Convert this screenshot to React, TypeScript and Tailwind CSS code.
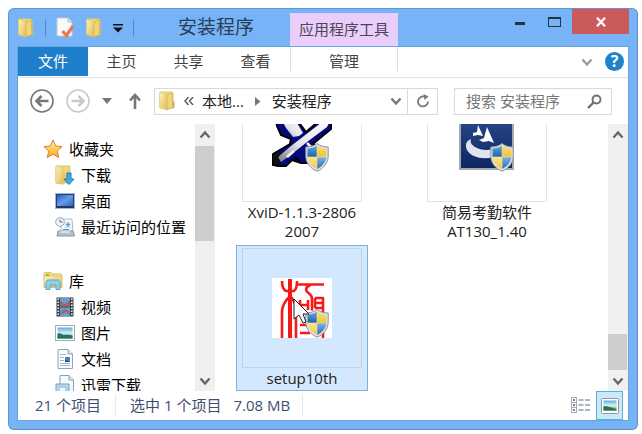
import type { ReactNode } from "react";
import clsx from "clsx";

/* ---------- icons ---------- */

function Defs() {
  return (
    <svg className="absolute h-0 w-0" aria-hidden="true">
      <defs>
        <linearGradient id="folder" x1="0" x2="1" y1="0" y2="1">
          <stop offset="0" stopColor="#fdf3bd" />
          <stop offset="1" stopColor="#dfbb4c" />
        </linearGradient>
        <linearGradient id="folderBack" x1="0" x2="0" y1="0" y2="1">
          <stop offset="0" stopColor="#f3dc83" />
          <stop offset="1" stopColor="#e0bf55" />
        </linearGradient>
        <linearGradient id="star" x1="0" x2="0" y1="0" y2="1">
          <stop offset="0" stopColor="#fff2a0" />
          <stop offset="1" stopColor="#f9a81c" />
        </linearGradient>
        <linearGradient id="screen" x1="0" x2="1" y1="0" y2="1">
          <stop offset="0" stopColor="#2457b8" />
          <stop offset="0.5" stopColor="#6a9be6" />
          <stop offset="1" stopColor="#2a5cc0" />
        </linearGradient>
        <linearGradient id="sky" x1="0" x2="0" y1="0" y2="1">
          <stop offset="0" stopColor="#5aaede" />
          <stop offset="0.5" stopColor="#d8f0f4" />
          <stop offset="1" stopColor="#3d8d62" />
        </linearGradient>
        <linearGradient id="navy" x1="0" x2="0" y1="0" y2="1">
          <stop offset="0" stopColor="#2a4a8c" />
          <stop offset="1" stopColor="#0d2660" />
        </linearGradient>
        <linearGradient id="silver" x1="0" x2="1" y1="1" y2="0">
          <stop offset="0" stopColor="#777" />
          <stop offset="0.4" stopColor="#e4e4e8" />
          <stop offset="1" stopColor="#fff" />
        </linearGradient>
        <linearGradient id="shieldBlue" x1="0" x2="0" y1="0" y2="1">
          <stop offset="0" stopColor="#7db4e2" />
          <stop offset="1" stopColor="#1c62b0" />
        </linearGradient>
        <linearGradient id="shieldGold" x1="0" x2="0" y1="0" y2="1">
          <stop offset="0" stopColor="#fbe48a" />
          <stop offset="1" stopColor="#efc33a" />
        </linearGradient>
        <clipPath id="shieldClip">
          <path d="M12 2.500C9.500 4.500 6 5.500 2.500 5.500v7C2.500 19 6.500 23.500 12 26c5.500-2.500 9.500-7 9.500-13.500v-7C18 5.500 14.500 4.500 12 2.500z" />
        </clipPath>
      </defs>
    </svg>
  );
}

function FolderIcon() {
  return (
    <svg width="18" height="20" viewBox="0 0 18 20">
      <path d="M2 1h12l1 1v15H2z" fill="url(#folderBack)" stroke="#dfc56f" />
      <path d="M1.500 1.500L9 3.500v15.500l-7.500-2.500z" fill="url(#folder)" stroke="#e3ca74" strokeWidth=".6" />
      <path d="M9 4l5.500-2v14.500L9 19z" fill="#efd577" stroke="#cba843" strokeWidth=".6" />
      <path d="M14.500 10h2v7l-2 .5z" fill="#d9bb58" />
      <path d="M15 12.500h1v3h-1z" fill="#7fb8d8" />
    </svg>
  );
}

function PropertiesIcon() {
  return (
    <svg width="19" height="21" viewBox="0 0 19 21">
      <path d="M1 1h11l4 4v14H1z" fill="#fafafa" stroke="#c4c8cc" />
      <path d="M12 1v4h4" fill="#e3e6e9" stroke="#b4b8bc" />
      <path d="M6.500 14l4 4.500L17 9" fill="none" stroke="#e4794f" strokeWidth="3.200" />
    </svg>
  );
}

function StarIcon() {
  return (
    <svg width="20" height="20" viewBox="0 0 20 20">
      <path
        d="M10 1l2.700 6 6.300.7-4.700 4.300 1.400 6.500L10 15.200l-5.700 3.300 1.400-6.500L1 7.700 7.300 7z"
        fill="url(#star)"
        stroke="#e2802b"
        strokeLinejoin="round"
      />
    </svg>
  );
}

function DownloadsIcon() {
  return (
    <svg width="20" height="20" viewBox="0 0 20 20">
      <path d="M1 1h14v17H1z" fill="url(#folderBack)" stroke="#dcc36e" />
      <path d="M1 1l7 1.500v17L1 18z" fill="url(#folder)" stroke="#dcc36e" strokeWidth=".6" />
      <path d="M12 8h4v6h3l-5 5.500L9 14h3z" fill="#41abea" stroke="#1d78b8" />
    </svg>
  );
}

function DesktopIcon() {
  return (
    <svg width="20" height="20" viewBox="0 0 20 20">
      <rect x=".5" y="2.500" width="19" height="15" fill="#d5dde6" stroke="#aab6c4" />
      <rect x="1.500" y="3.500" width="17" height="12" fill="url(#screen)" stroke="#173e8c" />
      <path d="M1 15.500h18v1.500H1z" fill="#26364e" />
    </svg>
  );
}

function RecentIcon() {
  return (
    <svg width="20" height="20" viewBox="0 0 20 20">
      <path d="M6 2h11l1 13H6z" fill="#f5f8fb" stroke="#b0b8c0" />
      <path d="M10 6h6v5h-6z" fill="#d1e7f8" />
      <path d="M13 5v5M11 7.500h4M8 12.500h6" stroke="#499bd8" strokeWidth="1.200" />
      <path d="M3 14h15l1.500 5H2z" fill="#b9bdc2" stroke="#8f959b" />
      <path d="M5 15h10" stroke="#e9ecee" strokeWidth="1.500" />
      <circle cx="5" cy="5" r="4.300" fill="#eef3f7" stroke="#9aa7b4" />
      <path d="M5 2.500V5h2.500" fill="none" stroke="#55697c" />
    </svg>
  );
}

function LibraryIcon() {
  return (
    <svg width="20" height="20" viewBox="0 0 20 20">
      <path d="M1 16.500V2.500l1-1h6l1.500 1.500H18l1 1v12.500z" fill="url(#folderBack)" stroke="#d9bf66" />
      <path d="M1.500 6h17v9h-17z" fill="url(#folder)" />
      <path d="M3 4h3" stroke="#6cae4c" strokeWidth="1.500" />
      <path d="M3 18.500V11l1.500-2h11l1.500 2v7.500h-4V14H7v4.500z" fill="#8fd0ee" stroke="#55a9d3" />
    </svg>
  );
}

function VideoIcon() {
  return (
    <svg width="20" height="20" viewBox="0 0 20 20">
      <path d="M1.500.5h17v19h-17z" fill="#34454f" />
      <path d="M5 1h10v8.500H5zM5 10.500h10V19H5z" fill="#5d9fd6" />
      <path d="M5 4l5 3 5-4v6H5zM7 14l3-2 5 3v3l-4-3-6 3z" fill="#b0604c" />
      <path d="M3.200 1.500v17M16.800 1.500v17" stroke="#e4ecef" strokeWidth="1.600" strokeDasharray="1.500 1.500" />
    </svg>
  );
}

function PictureIcon() {
  return (
    <svg width="20" height="20" viewBox="0 0 20 20">
      <rect x=".5" y="2.500" width="19" height="15" fill="#fff" stroke="#9fadb9" />
      <rect x="2.500" y="4.500" width="15" height="11" fill="url(#sky)" />
      <path d="M2.500 15.500v-5q3-1 6 1.500 4-.5 9 .5v3z" fill="#1f7565" />
    </svg>
  );
}

function DocumentIcon() {
  return (
    <svg width="20" height="20" viewBox="0 0 20 20">
      <path d="M3 .5h10L17.500 5v14.500H3z" fill="#fafcfd" stroke="#98a3ad" />
      <path d="M13 .5V5h4.500" fill="#dfe6ec" stroke="#98a3ad" />
      <path d="M5 5.500h6M5 8.500h4M5 11.500h4M5 14.500h10M5 16.500h10" stroke="#a6b6c4" />
      <rect x="10" y="8" width="5" height="5" fill="#3e83c5" />
      <path d="M10 11l5 2h-5z" fill="#203f6c" />
    </svg>
  );
}

function ThunderIcon() {
  return (
    <svg width="20" height="20" viewBox="0 0 20 20">
      <path d="M5 .5h9L18.500 5v14.500H5z" fill="#f4f9fc" stroke="#8ea0b0" />
      <path d="M14 .5V5h4.500" fill="#d9e4ed" stroke="#8ea0b0" />
      <path d="M1 9h13v10.500H1z" fill="#b9dbef" stroke="#6f9fc2" />
      <path d="M4 12h7v7H4z" fill="#eef8fd" stroke="#86b7d6" />
    </svg>
  );
}

function Shield() {
  return (
    <g transform="translate(33 31)">
      <path
        d="M12 .5C9 3 5 4 .8 4v9C.8 20 5.500 25.500 12 28.200 18.500 25.500 23.200 20 23.200 13V4C19 4 15 3 12 .5z"
        fill="#dde2e6"
        stroke="#8d9499"
      />
      <g clipPath="url(#shieldClip)">
        <path d="M0 0h12v14H0z" fill="url(#shieldBlue)" />
        <path d="M12 0h12v14H12z" fill="url(#shieldGold)" />
        <path d="M0 14h12v14H0z" fill="url(#shieldGold)" />
        <path d="M12 14h12v14H12z" fill="url(#shieldBlue)" />
        <path d="M12 0v28M0 14h24" stroke="#f3e7a6" strokeWidth=".6" />
      </g>
    </g>
  );
}

function XvidIcon() {
  return (
    <svg width="60" height="60" viewBox="0 0 60 60">
      <path
        d="M3 4l2 10 4 9 10 4-1 5L1 42v11l5 1h8l6-6 9 3h14l-1-20 17-14 1-9H48L34 20 22 4z"
        fill="#07077e"
        stroke="#000"
        strokeWidth="2"
      />
      <path d="M8 5l6 11 7 9 6-1 4-3L21 4z" fill="url(#silver)" />
      <path d="M6 45l13-11L50 10l8-1-3 6-20 15-15 12-11 8z" fill="url(#silver)" />
      <path d="M1 43l6-4 2 2-3 5 3 6-7 1z" fill="#111" />
      <path d="M15 45l7-6M35 31l4 4" stroke="#f4f4f4" strokeWidth="2.500" />
      <path d="M22 45l6 4" stroke="#000" strokeWidth="2" />
      <Shield />
    </svg>
  );
}

function InstallIcon() {
  return (
    <svg width="60" height="60" viewBox="0 0 60 60">
      <rect x="3" y="3" width="53" height="54" fill="url(#navy)" stroke="#a3a9b3" strokeWidth="2" />
      <path d="M16 21l4-1 1-7 5 11-5-1-5 1z" fill="#fff" />
      <path d="M22 28l5-2 3-11 7 16-5-2-6 1z" fill="#fff" />
      <path d="M14 27C6 30 8 40 17 44c6 2.500 12 3 19 1v-8c-6 2-13 1-18-2-4-2.500-5-5-4-8z" fill="#dfe5ef" />
      <Shield />
    </svg>
  );
}

function SealIcon() {
  return (
    <svg width="60" height="60" viewBox="0 0 60 60">
      <path d="M0 0h60v60H0z" fill="#fff" />
      <g fill="none" stroke="#f8191b" strokeWidth="2.600" strokeLinejoin="round">
        <path d="M10 3q0 8 4 10h8q3-2 3-10" />
        <path d="M18 1v59" strokeWidth="4" />
        <path d="M10 60V34q0-8 8-16 6 6 6 14v28" />
        <path d="M26 6.500h26M39 6.500q-8 4-3 8 4 3 4 6v12" />
        <path d="M28 22v10M36 22v10M28 27h8M43 20h8v40M43 20v10M43 25h7M43 30h7" />
        <path d="M28 47h12M28 55h10" />
      </g>
      <Shield />
      <path d="M22 21v20l5-4 4 8 3-1-3-8h6z" fill="#fff" stroke="#222" />
    </svg>
  );
}

function Chevron({ up = false, className = "" }: { up?: boolean; className?: string }) {
  return (
    <svg width="12" height="10" viewBox="0 0 12 10" className={clsx(className, up && "rotate-180")}>
      <path d="M1.500 2.500L6 7.500l4.500-5" fill="none" stroke="currentColor" strokeWidth="2.400" />
    </svg>
  );
}

/* ---------- window parts ---------- */

function TitleBar() {
  return (
    <header className="flex h-[37px] justify-between">
      <div className="flex">
        <div className="flex w-[161px] items-center gap-[10px]">
          <FolderIcon />
          <span className="h-4 w-px bg-[#5586bd]" />
          <button aria-label="属性">
            <PropertiesIcon />
          </button>
          <button aria-label="新建文件夹">
            <FolderIcon />
          </button>
          <button aria-label="自定义快速访问工具栏">
            <svg width="10" height="10" viewBox="0 0 10 10">
              <path d="M0 1h10v1.500H0zM0 4.500h10L5 9.500z" fill="#111" />
            </svg>
          </button>
          <span className="h-4 w-px bg-[#5586bd]" />
        </div>
        <h1 className="w-[112px] text-[19px] leading-9 text-[#2c3e55]">安装程序</h1>
        <div className="mt-1 w-[108px] bg-[#e9cdfb] text-center text-[15px] leading-[33px] text-[#4c4557]">应用程序工具</div>
      </div>
      <div className="flex h-[25px]">
        <button aria-label="最小化" className="grid w-8 place-items-center pt-1">
          <span className="h-[3px] w-[10px] bg-[#26323e]" />
        </button>
        <button aria-label="最大化" className="grid w-9 place-items-center">
          <span className="h-[10px] w-[13px] border border-t-2 border-[#26323e]" />
        </button>
        <button aria-label="关闭" className="grid w-[57px] place-items-center bg-[#cb5a5a]">
          <svg width="12" height="10" viewBox="0 0 12 10">
            <path d="M2 .8l8 8.400M10 .8L2 9.200" stroke="#fff" strokeWidth="2.200" />
          </svg>
        </button>
      </div>
    </header>
  );
}

function Ribbon() {
  return (
    <nav className="flex h-[31px] items-start justify-between border-b border-[#dfe1e3] text-[15px] leading-[29px] text-[#444]">
      <div className="flex">
        <button className="w-[70px] bg-[#1f7fcb] text-white">文件</button>
        {["主页", "共享", "查看"].map((tab) => (
          <button key={tab} className="w-[67px]">
            {tab}
          </button>
        ))}
        <button className="ml-px h-6 w-[108px] border-x border-[#dcdcdc]">管理</button>
      </div>
      <div className="flex h-[29px] items-center gap-3 pr-1">
        <button aria-label="展开功能区">
          <Chevron className="text-[#9b9b9b]" />
        </button>
        <button aria-label="帮助" className="size-[19px] rounded-full bg-[#1f80cc] text-base leading-[19px] font-bold text-white">
          ?
        </button>
      </div>
    </nav>
  );
}

function RoundArrow({ label, color, flip = false }: { label: string; color: string; flip?: boolean }) {
  return (
    <button aria-label={label}>
      <svg width="24" height="24" viewBox="0 0 24 24" className={clsx(flip && "-scale-x-100")}>
        <g fill="none" stroke={color}>
          <circle cx="12" cy="12" r="11" strokeWidth="1.600" />
          <path d="M18.500 12H7M11.500 7L6.500 12l5 5" strokeWidth="2.600" />
        </g>
      </svg>
    </button>
  );
}

function AddressBar() {
  return (
    <div className="flex h-[46px] items-center pr-4 pl-3 text-[15px] text-[#222]">
      <div className="flex w-[124px] items-center gap-3">
        <RoundArrow label="后退" color="#777" />
        <RoundArrow label="前进" color="#c9c9c9" flip />
        <button aria-label="最近浏览的位置">
          <svg width="10" height="6" viewBox="0 0 10 6">
            <path d="M0 0h10L5 6z" fill="#777" />
          </svg>
        </button>
        <button aria-label="上移" className="ml-1">
          <svg width="14" height="16" viewBox="0 0 14 16">
            <path d="M7 16V3M2 7.500L7 2l5 5.500" fill="none" stroke="#777" strokeWidth="2.600" />
          </svg>
        </button>
      </div>
      <div className="flex h-[27px] flex-1 items-center border border-[#d9d9d9] pl-[3px]">
        <FolderIcon />
        <svg width="10" height="8" viewBox="0 0 10 8" className="mx-2">
          <path d="M4.500 0L1 4l3.500 4M9 0L5.500 4 9 8" fill="none" stroke="#555" strokeWidth="1.400" />
        </svg>
        <button>本地...</button>
        <svg width="6" height="9" viewBox="0 0 6 9" className="mx-[11px]">
          <path d="M0 0l5.500 4.500L0 9z" fill="#777" />
        </svg>
        <button>安装程序</button>
        <button aria-label="以前的位置" className="mr-[5px] ml-auto">
          <Chevron className="text-[#777]" />
        </button>
        <button aria-label="刷新" className="grid h-full w-[30px] place-items-center border-l border-[#d9d9d9]">
          <svg width="14" height="14" viewBox="0 0 14 14">
            <path d="M12 7.500A5 5 0 1 1 8.500 2.700" fill="none" stroke="#777" strokeWidth="1.800" />
            <path d="M7.500 0l5 2.500-4 3.500z" fill="#777" />
          </svg>
        </button>
      </div>
      <label className="ml-4 flex h-[27px] w-[158px] items-center border border-[#d9d9d9] pr-[9px] pl-[11px]">
        <input
          aria-label="搜索"
          placeholder="搜索 安装程序"
          className="w-0 min-w-0 flex-1 bg-transparent outline-none placeholder:text-[#777]"
        />
        <svg width="15" height="15" viewBox="0 0 15 15">
          <circle cx="9.500" cy="5.500" r="4" fill="none" stroke="#6f6f6f" strokeWidth="1.900" />
          <path d="M6.500 8.500L1 14" stroke="#6f6f6f" strokeWidth="2.400" />
        </svg>
      </label>
    </div>
  );
}

function ScrollBar({ children }: { children: ReactNode }) {
  return (
    <div className="flex w-5 shrink-0 flex-col items-center bg-[#f0f0f0] text-[#666]">
      <button aria-label="向上滚动" className="grid h-[22px] w-full place-items-center">
        <Chevron up />
      </button>
      <div className="flex w-full flex-1 flex-col pr-px">{children}</div>
      <button aria-label="向下滚动" className="grid h-[21px] w-full place-items-center">
        <Chevron />
      </button>
    </div>
  );
}

const places = [
  {
    name: "收藏夹",
    icon: <StarIcon />,
    items: [
      { name: "下载", icon: <DownloadsIcon /> },
      { name: "桌面", icon: <DesktopIcon /> },
      { name: "最近访问的位置", icon: <RecentIcon /> },
    ],
  },
  {
    name: "库",
    icon: <LibraryIcon />,
    items: [
      { name: "视频", icon: <VideoIcon /> },
      { name: "图片", icon: <PictureIcon /> },
      { name: "文档", icon: <DocumentIcon /> },
      { name: "迅雷下载", icon: <ThunderIcon /> },
    ],
  },
];

function PlaceTree() {
  return (
    <aside className="flex w-[197px] shrink-0">
      <div className="flex flex-1 flex-col gap-7 overflow-hidden pt-3 text-[15px] whitespace-nowrap text-black">
        {places.map((group) => (
          <ul key={group.name}>
            <li>
              <button className="flex h-[26px] items-center gap-[6px] pl-[25px]">
                {group.icon}
                {group.name}
              </button>
            </li>
            {group.items.map((item) => (
              <li key={item.name}>
                <button className="flex h-[26px] items-center gap-[6px] pl-[37px]">
                  {item.icon}
                  {item.name}
                </button>
              </li>
            ))}
          </ul>
        ))}
      </div>
      <ScrollBar>
        <div className="h-[95px] bg-[#cdcdcd]" />
      </ScrollBar>
    </aside>
  );
}

function FileTile({ icon, name, selected = false }: { icon: ReactNode; name: string; selected?: boolean }) {
  return (
    <button
      className={clsx(
        "flex w-[132px] flex-col items-center gap-px border pt-[2px] pb-[2px]",
        selected ? "border-[#78b1e2] bg-[#d4e8fd]" : "border-transparent",
      )}
    >
      <span className={clsx("grid size-[120px] place-items-center border", selected ? "border-[#bfd2e6]" : "border-[#e4e4e4]")}>
        {icon}
      </span>
      <span className="text-[15px] leading-[19px] whitespace-pre-line text-[#222]">{name}</span>
    </button>
  );
}

function FilePane() {
  return (
    <main className="flex flex-1 overflow-hidden">
      <div className="flex flex-1 flex-col justify-end overflow-hidden pl-[21px]">
        <div className="flex flex-wrap gap-x-[53px] gap-y-px">
          <FileTile icon={<XvidIcon />} name={"XviD-1.1.3-2806\n2007"} />
          <FileTile icon={<InstallIcon />} name={"简易考勤软件\nAT130_1.40"} />
          <FileTile icon={<SealIcon />} name="setup10th" selected />
        </div>
      </div>
      <ScrollBar>
        <div className="mt-auto h-9 bg-[#cdcdcd]" />
      </ScrollBar>
    </main>
  );
}

function StatusBar() {
  return (
    <footer className="flex h-[29px] items-center pr-[5px] pl-[17px] text-[15px] text-[#3d4f72]">
      <span className="border-r border-[#e6e9ee] pr-[14px]">21 个项目</span>
      <span className="pl-[14px]">选中 1 个项目</span>
      <span className="ml-3 border-r border-[#e6e9ee] pr-3">7.08 MB</span>
      <button aria-label="详细信息" className="ml-auto pr-[5px]">
        <svg width="20" height="17" viewBox="0 0 20 17">
          {[0.5, 5.5, 10.5].map((y, i) => (
            <g key={y}>
              <rect x=".5" y={y} width="5" height="5" fill="#fff" stroke="#a3adb8" />
              <rect x="2" y={y + 1.5} width="2" height="2" fill={i === 1 ? "#d9534f" : "#5b89b5"} />
              <path d={`M7.500 ${y + 2.5}h5M14 ${y + 2.5}h5`} stroke="#5d6d80" strokeWidth="1.200" />
            </g>
          ))}
        </svg>
      </button>
      <button aria-label="大图标" className="grid h-full w-[27px] place-items-center border border-[#58b2d6] bg-[#cbe8f6]">
        <svg width="18" height="16" viewBox="0 0 18 16">
          <rect x=".5" y=".5" width="17" height="15" rx="1" fill="#fff" stroke="#8c99a5" />
          <rect x="2.500" y="2.500" width="13" height="10" fill="url(#sky)" />
          <path d="M2.500 12.500V8q6 0 13 3.500v1z" fill="#2c7350" />
        </svg>
      </button>
    </footer>
  );
}

export default function App() {
  return (
    <div className="h-screen bg-white pt-2 pr-1 pb-1 pl-2 font-['Open_Sans','Noto_Sans_CJK_SC',sans-serif]">
      <Defs />
      <div className="flex h-full flex-col rounded-md border border-[#5c97dc] border-r-[#5f8fc4] border-b-[#5f8fc4] bg-[#77b3f7] pr-2 pb-2 pl-2">
        <TitleBar />
        <div className="flex min-h-0 flex-1 flex-col border border-[#6aa3e2] bg-white">
          <Ribbon />
          <AddressBar />
          <div className="flex min-h-0 flex-1">
            <PlaceTree />
            <FilePane />
          </div>
          <StatusBar />
        </div>
      </div>
    </div>
  );
}
